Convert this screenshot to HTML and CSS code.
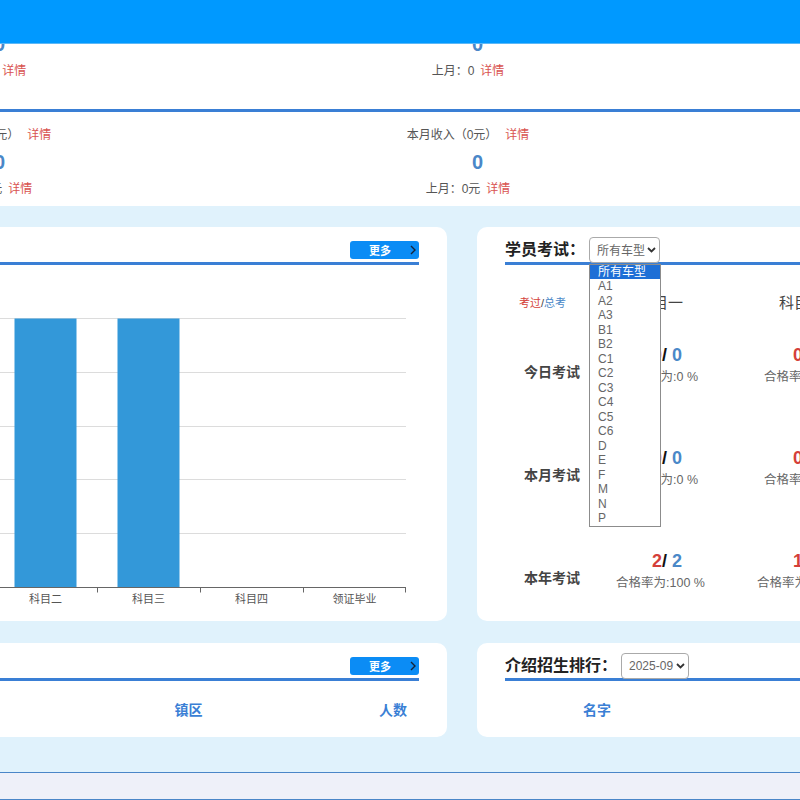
FILE: index.html
```html
<!DOCTYPE html>
<html lang="zh-CN">
<head>
    <meta charset="UTF-8">
    <meta name="viewport" content="width=device-width, initial-scale=1.0">
    <title>驾校首页</title>
    <link rel="stylesheet" href="styles.css">
</head>
<body>
<div class="page">
    <header class="topbar"></header>

    <section class="stats">
        <div class="stats-row first">
            <div class="stat">
                <div class="stat-title">今日报名（0人）<a class="detail">详情</a></div>
                <div class="stat-num">0</div>
                <div class="stat-sub">昨日：0<a class="detail">详情</a></div>
            </div>
            <div class="stat">
                <div class="stat-title">本月报名（0人）<a class="detail">详情</a></div>
                <div class="stat-num">0</div>
                <div class="stat-sub">上月：0<a class="detail">详情</a></div>
            </div>
        </div>
        <div class="stats-row">
            <div class="stat">
                <div class="stat-title">今日收入（0元）<a class="detail">详情</a></div>
                <div class="stat-num">0</div>
                <div class="stat-sub">昨日：0元<a class="detail">详情</a></div>
            </div>
            <div class="stat">
                <div class="stat-title">本月收入（0元）<a class="detail">详情</a></div>
                <div class="stat-num">0</div>
                <div class="stat-sub">上月：0元<a class="detail">详情</a></div>
            </div>
        </div>
    </section>

    <main class="panels">
        <!-- 学员进度 -->
        <div class="card chart-card">
            <div class="card-head">
                <h3>学员进度：</h3>
                <a class="btn-more">更多
                    <svg width="6" height="10" viewBox="0 0 6 10"><path d="M1 1l4 4-4 4" fill="none" stroke="#14243a" stroke-width="1.4"/></svg>
                </a>
            </div>
            <svg class="chart" width="560" height="356" viewBox="0 0 560 356">
                <g class="grid">
                    <line x1="31" y1="53.5" x2="546" y2="53.5"/>
                    <line x1="31" y1="107.5" x2="546" y2="107.5"/>
                    <line x1="31" y1="161.5" x2="546" y2="161.5"/>
                    <line x1="31" y1="214.5" x2="546" y2="214.5"/>
                    <line x1="31" y1="268.5" x2="546" y2="268.5"/>
                </g>
                <g class="ylabels">
                    <text x="24" y="57.5">5</text>
                    <text x="24" y="111.5">4</text>
                    <text x="24" y="165.5">3</text>
                    <text x="24" y="218.5">2</text>
                    <text x="24" y="272.5">1</text>
                    <text x="24" y="326.5">0</text>
                </g>
                <g class="bars">
                    <rect x="51.5" y="161.5" width="62" height="161"/>
                    <rect x="154.5" y="53.5" width="62" height="269"/>
                    <rect x="257.5" y="53.5" width="62" height="269"/>
                </g>
                <g class="axis">
                    <line x1="31" y1="322.5" x2="546" y2="322.5"/>
                    <line x1="31.5" y1="322.5" x2="31.5" y2="327.5"/>
                    <line x1="134.5" y1="322.5" x2="134.5" y2="327.5"/>
                    <line x1="237.5" y1="322.5" x2="237.5" y2="327.5"/>
                    <line x1="340.5" y1="322.5" x2="340.5" y2="327.5"/>
                    <line x1="443.5" y1="322.5" x2="443.5" y2="327.5"/>
                    <line x1="545.5" y1="322.5" x2="545.5" y2="327.5"/>
                </g>
                <g class="xlabels">
                    <text x="82.5" y="338">科目一</text>
                    <text x="185.5" y="338">科目二</text>
                    <text x="288.5" y="338">科目三</text>
                    <text x="391.5" y="338">科目四</text>
                    <text x="494.5" y="338">领证毕业</text>
                </g>
            </svg>
        </div>

        <!-- 学员考试 -->
        <div class="card">
            <div class="card-head">
                <h3>学员考试：</h3>
                <div class="select-wrap">
                    <div class="select car-select">所有车型
                        <svg width="9" height="6" viewBox="0 0 9 6"><path d="M1 1l3.5 3.5L8 1" fill="none" stroke="#333" stroke-width="1.8"/></svg>
                    </div>
                    <ul class="options">
                        <li class="active">所有车型</li>
                        <li>A1</li><li>A2</li><li>A3</li>
                        <li>B1</li><li>B2</li>
                        <li>C1</li><li>C2</li><li>C3</li><li>C4</li><li>C5</li><li>C6</li>
                        <li>D</li><li>E</li><li>F</li><li>M</li><li>N</li><li>P</li>
                    </ul>
                </div>
            </div>
            <div class="exam-head">
                <div class="exam-key"><span class="red">考过</span>/<span class="blue">总考</span></div>
                <div>科目一</div>
                <div>科目二</div>
                <div>科目三</div>
                <div>科目四</div>
            </div>
            <div class="exam-body">
                <div class="exam-row">
                    <div class="exam-label">今日考试</div>
                    <div class="exam-cell"><div class="exam-num"><span class="red">0</span>/ <span class="blue">0</span></div><div class="exam-rate">合格率为:0 %</div></div>
                    <div class="exam-cell"><div class="exam-num"><span class="red">0</span>/ <span class="blue">0</span></div><div class="exam-rate">合格率为:0 %</div></div>
                    <div class="exam-cell"><div class="exam-num"><span class="red">0</span>/ <span class="blue">0</span></div><div class="exam-rate">合格率为:0 %</div></div>
                    <div class="exam-cell"><div class="exam-num"><span class="red">0</span>/ <span class="blue">0</span></div><div class="exam-rate">合格率为:0 %</div></div>
                </div>
                <div class="exam-row">
                    <div class="exam-label">本月考试</div>
                    <div class="exam-cell"><div class="exam-num"><span class="red">0</span>/ <span class="blue">0</span></div><div class="exam-rate">合格率为:0 %</div></div>
                    <div class="exam-cell"><div class="exam-num"><span class="red">0</span>/ <span class="blue">0</span></div><div class="exam-rate">合格率为:0 %</div></div>
                    <div class="exam-cell"><div class="exam-num"><span class="red">0</span>/ <span class="blue">0</span></div><div class="exam-rate">合格率为:0 %</div></div>
                    <div class="exam-cell"><div class="exam-num"><span class="red">0</span>/ <span class="blue">0</span></div><div class="exam-rate">合格率为:0 %</div></div>
                </div>
                <div class="exam-row">
                    <div class="exam-label">本年考试</div>
                    <div class="exam-cell"><div class="exam-num"><span class="red">2</span>/ <span class="blue">2</span></div><div class="exam-rate">合格率为:100 %</div></div>
                    <div class="exam-cell"><div class="exam-num"><span class="red">1</span>/ <span class="blue">1</span></div><div class="exam-rate">合格率为:100 %</div></div>
                    <div class="exam-cell"><div class="exam-num"><span class="red">0</span>/ <span class="blue">0</span></div><div class="exam-rate">合格率为:0 %</div></div>
                    <div class="exam-cell"><div class="exam-num"><span class="red">0</span>/ <span class="blue">0</span></div><div class="exam-rate">合格率为:0 %</div></div>
                </div>
            </div>
        </div>

        <!-- 镇区招生 -->
        <div class="card rank-card">
            <div class="card-head">
                <h3>镇区招生排行：</h3>
                <a class="btn-more">更多
                    <svg width="6" height="10" viewBox="0 0 6 10"><path d="M1 1l4 4-4 4" fill="none" stroke="#14243a" stroke-width="1.4"/></svg>
                </a>
            </div>
            <div class="rank-head town">
                <div class="col-left">排名</div>
                <div>镇区</div>
                <div class="col-right">人数</div>
            </div>
        </div>

        <!-- 介绍招生 -->
        <div class="card rank-card">
            <div class="card-head">
                <h3>介绍招生排行：</h3>
                <div class="select date-select">2025-09
                    <svg width="9" height="6" viewBox="0 0 9 6"><path d="M1 1l3.5 3.5L8 1" fill="none" stroke="#333" stroke-width="1.8"/></svg>
                </div>
            </div>
            <div class="rank-head intro">
                <div>名字</div>
                <div>人数</div>
            </div>
        </div>
    </main>

    <footer class="footer"></footer>
</div>
</body>
</html>
```

FILE: styles.css
```css
body {
    margin: 0;
    overflow: hidden;
    background-color: #e0f2fc;
    font-family: "Liberation Sans", "Noto Sans CJK SC", sans-serif;
    color: #555;
}

.page {
    margin-left: -249px;
    width: 1600px;
}

.topbar {
    position: relative;
    z-index: 1;
    height: 43px;
    background-color: #0099ff;
    border-bottom: 1px solid #5cb8f7;
}

/* 统计数字 */
.stats {
    background-color: #fff;
}

.stats-row {
    display: grid;
    grid-template-columns: repeat(3, 478px);
    padding: 10px 0 3px;
    border-top: 3px solid #3a7fd5;
}

.stats-row.first {
    margin-top: -50px;
    padding-bottom: 24px;
    border-top: none;
}

.stat {
    text-align: center;
    font-size: 12px;
    line-height: 27px;
}

.stat-num {
    padding-left: 19px;
    font-size: 20px;
    font-weight: bold;
    color: #4a87c8;
}

.detail {
    color: #d9534f;
    margin-left: 6px;
}

.stat-title .detail {
    margin-left: 8px;
}

/* 面板 */
.panels {
    display: grid;
    grid-template-columns: 615px 720px;
    gap: 22px 30px;
    padding: 21px 0 35px 81px;
}

.card {
    background-color: #fff;
    border-radius: 10px;
    padding: 0 28px 27px;
}

.chart-card,
.rank-card {
    padding-bottom: 0;
}

.card-head {
    display: flex;
    align-items: center;
    gap: 4px;
    height: 25px;
    padding-top: 10px;
    border-bottom: 3px solid #3a7fd5;
}

.card-head h3 {
    margin: 0;
    font-size: 16px;
    line-height: 25px;
    color: #222;
}

.btn-more {
    display: flex;
    align-items: center;
    justify-content: space-between;
    box-sizing: border-box;
    width: 69px;
    height: 18px;
    margin-left: auto;
    padding: 0 3px 0 19px;
    border-radius: 3px;
    background-color: #0b8cf5;
    color: #fff;
    font-size: 11px;
    font-weight: bold;
}

.chart {
    display: block;
    font-family: "Liberation Sans", "Noto Sans CJK SC", sans-serif;
}

.chart .grid line {
    stroke: #dcdcdc;
}

.chart .axis line {
    stroke: #666;
}

.chart .bars rect {
    fill: #3398d9;
}

.chart text {
    font-size: 11px;
    fill: #555;
}

.chart .xlabels text {
    text-anchor: middle;
}

.chart .ylabels text {
    text-anchor: end;
}

/* 下拉框 */
.select {
    display: flex;
    align-items: center;
    justify-content: space-between;
    box-sizing: border-box;
    height: 26px;
    padding: 0 3px 0 7px;
    border: 1px solid #aaa;
    border-radius: 4px;
    background-color: #fff;
    font-size: 12px;
    color: #666;
}

.car-select {
    width: 71px;
}

.date-select {
    width: 68px;
    margin-top: 1px;
}

.select-wrap {
    position: relative;
}

.options {
    position: absolute;
    top: calc(100% + 1px);
    left: 0;
    z-index: 2;
    width: 70px;
    margin: 0;
    padding: 0;
    list-style: none;
    border: 1px solid #8c8c8c;
    background-color: #fff;
}

.options li {
    height: 14.5px;
    padding-left: 8px;
    font-size: 12px;
    line-height: 14.5px;
    color: #666;
}

.options li.active {
    background-color: #1e6fd6;
    color: #fff;
}

/* 考试表 */
.exam-head,
.exam-row {
    display: grid;
    grid-template-columns: 85px repeat(4, 141px);
    text-align: center;
}

.exam-head {
    padding-top: 27px;
    margin-bottom: 30px;
    font-size: 15px;
    line-height: 22px;
    color: #444;
}

.exam-key {
    padding-right: 10px;
    font-size: 11px;
}

.exam-body {
    display: flex;
    flex-direction: column;
    gap: 59px;
}

.exam-label {
    padding: 17px 0 0 9px;
    font-size: 14px;
    font-weight: bold;
    line-height: 22px;
    color: #444;
}

.exam-num {
    padding-left: 13px;
    font-size: 18px;
    font-weight: bold;
    line-height: 22px;
    color: #111;
}

.exam-rate {
    font-size: 12.5px;
    line-height: 22px;
    color: #666;
}

.red {
    color: #d43f3a;
}

.blue {
    color: #4a88c8;
}

/* 排行 */
.rank-head {
    display: grid;
    padding: 18px 0 16px;
    font-size: 14px;
    font-weight: bold;
    line-height: 22px;
    color: #3a7fd5;
    text-align: center;
}

.rank-head.town {
    grid-template-columns: 1fr 121px 170px;
}

.rank-head.intro {
    grid-template-columns: 184px 280px 1fr;
}

.col-left {
    text-align: left;
}

.col-right {
    padding-right: 12px;
    text-align: right;
}

.footer {
    height: 26px;
    border-top: 1px solid #4a86c8;
    border-bottom: 1px solid #4a86c8;
    background-color: #eef0f9;
}
```
